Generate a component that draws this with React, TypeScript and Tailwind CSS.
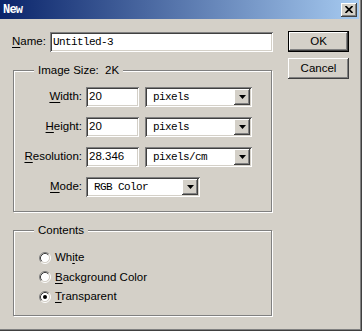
import type { ReactNode } from "react";

const sans = "font-['Liberation_Sans',Arial,sans-serif] text-[11.5px] text-black";
const mono = "font-['Liberation_Mono','Courier_New',monospace] text-[11px] tracking-[-0.6px] text-black";
const sunken =
  "bg-white shadow-[inset_1px_1px_0_#808080,inset_-1px_-1px_0_#ffffff,inset_2px_2px_0_#404040,inset_-2px_-2px_0_#d4d0c8]";
const raised =
  "bg-[#d4d0c8] shadow-[inset_-1px_-1px_0_#404040,inset_1px_1px_0_#ffffff,inset_-2px_-2px_0_#808080]";

function Key({ children, k }: { children: string; k: number }) {
  // underline the mnemonic letter
  return (
    <>
      {children.slice(0, k)}
      <span className="underline underline-offset-[2px]">{children[k]}</span>
      {children.slice(k + 1)}
    </>
  );
}

function Select({ value, width }: { value: string; width: string }) {
  return (
    <div className={`${sunken} ${width} h-[20px] flex items-center p-[2px]`}>
      <span className={`${mono} flex-1 pl-[6px] leading-[16px]`}>{value}</span>
      <div className={`${raised} w-[16px] h-[16px] flex items-center justify-center`}>
        <svg width="7" height="4" viewBox="0 0 7 4">
          <path d="M0 0H7L3.5 4Z" fill="#000" />
        </svg>
      </div>
    </div>
  );
}

function Field({ label, children }: { label: ReactNode; children: ReactNode }) {
  return (
    <div className="flex items-center h-[20px]">
      <div className={`${sans} w-[68px] text-right`}>{label}</div>
      <div className="ml-[4px] flex items-center gap-[6px]">{children}</div>
    </div>
  );
}

function Group({ title, className, children }: { title: string; className: string; children: ReactNode }) {
  return (
    <div
      className={`relative ml-[1px] w-[259px] border border-[#808080] shadow-[inset_1px_1px_0_#ffffff,1px_1px_0_#ffffff] ${className}`}
    >
      <span className={`${sans} absolute left-[20px] top-[-8px] leading-[15px] px-[4px] bg-[#d4d0c8] whitespace-pre`}>
        {title}
      </span>
      {children}
    </div>
  );
}

function Radio({ checked, label }: { checked?: boolean; label: ReactNode }) {
  return (
    <div className="flex items-center h-[19.5px] gap-[4px]">
      <svg width="12" height="12" viewBox="0 0 12 12">
        <circle cx="6" cy="6" r="4.5" fill="#fff" />
        <path d="M2.11 9.89A5.5 5.5 0 0 1 9.89 2.11" stroke="#808080" fill="none" />
        <path d="M9.89 2.11A5.5 5.5 0 0 1 2.11 9.89" stroke="#ffffff" fill="none" />
        <path d="M2.82 9.18A4.5 4.5 0 0 1 9.18 2.82" stroke="#404040" fill="none" />
        <path d="M9.18 2.82A4.5 4.5 0 0 1 2.82 9.18" stroke="#d4d0c8" fill="none" />
        {checked && <circle cx="6" cy="6" r="2" fill="#000" />}
      </svg>
      <span className={sans}>{label}</span>
    </div>
  );
}

export default function App() {
  return (
    <div className="w-[362px] h-[331px] bg-[#d4d0c8] flex flex-col overflow-hidden shadow-[inset_-1px_-1px_0_#404040,inset_-2px_-2px_0_#808080]">
      <div className="h-[19px] mr-[3px] flex items-center justify-between bg-[linear-gradient(to_right,#0a246a,#a6caf0)]">
        <span className="pl-[3px] font-['Liberation_Mono',monospace] font-bold text-[12px] tracking-[-0.8px] text-white">
          New
        </span>
        <div className={`${raised} w-[16px] h-[14px] mr-[2px] flex items-center justify-center`}>
          <svg width="8" height="7" viewBox="0 0 8 7">
            <path d="M0.5 0L7.5 7M7.5 0L0.5 7" stroke="#000" strokeWidth="1.7" />
          </svg>
        </div>
      </div>

      <div className="flex pl-[12px] pt-[12px]">
        <div className="w-[262px] flex flex-col">
          <div className="flex items-center mt-[1px]">
            <span className={`${sans} w-[38px]`}>
              <Key k={0}>Name:</Key>
            </span>
            <div className={`${sunken} w-[223px] h-[20px] flex items-center pl-[3px]`}>
              <span className={mono}>Untitled-3</span>
            </div>
          </div>

          <Group title="Image Size:  2K" className="mt-[18px] pt-[16px] pb-[14px] flex flex-col gap-[10px]">
            <Field label={<Key k={0}>Width:</Key>}>
              <div className={`${sunken} w-[53px] h-[20px] flex items-center pl-[3px]`}>
                <span className={sans}>20</span>
              </div>
              <Select value="pixels" width="w-[107px]" />
            </Field>
            <Field label={<Key k={0}>Height:</Key>}>
              <div className={`${sunken} w-[53px] h-[20px] flex items-center pl-[3px]`}>
                <span className={sans}>20</span>
              </div>
              <Select value="pixels" width="w-[107px]" />
            </Field>
            <Field label={<Key k={0}>Resolution:</Key>}>
              <div className={`${sunken} w-[53px] h-[20px] flex items-center pl-[3px]`}>
                <span className={sans}>28.346</span>
              </div>
              <Select value="pixels/cm" width="w-[107px]" />
            </Field>
            <Field label={<Key k={0}>Mode:</Key>}>
              <Select value="RGB Color" width="w-[114px]" />
            </Field>
          </Group>

          <Group title="Contents" className="mt-[18px] h-[86px] pt-[17px] pl-[25px]">
            <Radio label={<Key k={2}>White</Key>} />
            <Radio label={<Key k={0}>Background Color</Key>} />
            <Radio checked label={<Key k={0}>Transparent</Key>} />
          </Group>
        </div>

        <div className="ml-[14px] flex flex-col gap-[6px]">
          <div className="w-[61px] h-[21px] border border-black">
            <div className={`${raised} ${sans} h-full flex items-center justify-center`}>OK</div>
          </div>
          <div className={`${raised} ${sans} w-[61px] h-[21px] flex items-center justify-center`}>Cancel</div>
        </div>
      </div>
    </div>
  );
}
